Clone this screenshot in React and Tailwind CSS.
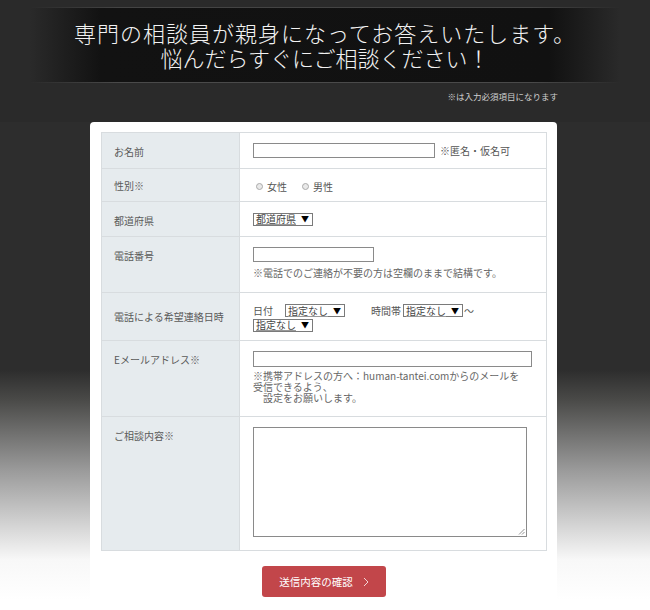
import React from "react";

const font = { fontFamily: '"Noto Sans CJK JP", "Noto Sans", sans-serif' };

function FakeSelect({ label, className = "" }) {
  return (
    <span
      className={`inline-flex h-[13px] items-center border border-[#7a7a7a] bg-white pl-[2px] pr-[3px] text-[10px] leading-none text-[#444] ${className}`}
    >
      <span className="underline decoration-[#999]">{label}</span>
      <span className="ml-[5px] text-[8px] text-black">▼</span>
    </span>
  );
}

function Radio({ label }) {
  return (
    <span className="inline-flex items-center gap-[4px]">
      <span className="inline-block h-[7px] w-[7px] rounded-full border border-[#aaa] bg-[#e9e9e9]" />
      <span>{label}</span>
    </span>
  );
}

function Row({ label, labelClass = "pt-[11px]", children, className = "" }) {
  return (
    <div className={`flex border-t border-[#d8dcdf] ${className}`}>
      <div
        className={`w-[138px] shrink-0 border-r border-[#d8dcdf] bg-[#e6ebee] pl-[12px] text-[10px] text-[#5a5a5a] ${labelClass}`}
      >
        {label}
      </div>
      <div className="flex-1 pl-[13px] text-[10px] text-[#555]">{children}</div>
    </div>
  );
}

export default function App() {
  return (
    <div
      className="h-[610px] w-[650px] overflow-hidden bg-[linear-gradient(to_bottom,#2d2d2d_0px,#2d2d2d_370px,#4a4a48_400px,#9a9a9a_470px,#f8f8f8_560px,#ffffff_600px)]"
      style={font}
    >
      {/* header */}
      <div className="h-[122px] bg-[#2a2a2a] pt-[7px]">
        <div className="mx-auto w-[590px]">
          <div className="h-px bg-[linear-gradient(to_right,transparent,#444_15%,#444_85%,transparent)]" />
          <div className="flex h-[74px] flex-col items-center justify-center bg-[linear-gradient(to_right,#2a2a2a_0%,#121212_12%,#111111_88%,#2a2a2a_100%)]">
            <p className="text-[22px] font-light leading-[25px] tracking-[1px] text-[#f2f2f2]">
              専門の相談員が親身になってお答えいたします。
            </p>
            <p className="text-[22px] font-light leading-[25px] text-[#f2f2f2]">
              悩んだらすぐにご相談ください！
            </p>
          </div>
          <div className="h-px bg-[linear-gradient(to_right,transparent,#4a4a4a_15%,#4a4a4a_85%,transparent)]" />
        </div>
        <p className="mt-[7px] pr-[92px] text-right text-[8.5px] text-[#cfcfcf]">
          ※は入力必須項目になります
        </p>
      </div>

      {/* form card */}
      <div className="ml-[90px] w-[467px] rounded-t-[4px] bg-white px-[10px] pt-[10px] pl-[11px]">
        <div className="border-b border-l border-r border-[#d8dcdf]">
          <Row label="お名前" className="h-[36px]">
            <div className="flex items-center pt-[10px]">
              <span className="h-[15px] w-[182px] border border-[#8a8a8a] bg-white" />
              <span className="ml-[5px]">※匿名・仮名可</span>
            </div>
          </Row>
          <Row label="性別※" className="h-[33px]" labelClass="pt-[9px]">
            <div className="flex items-center gap-[15px] pt-[10px] pl-[3px]">
              <Radio label="女性" />
              <Radio label="男性" />
            </div>
          </Row>
          <Row label="都道府県" className="h-[35px]">
            <div className="pt-[9px]">
              <FakeSelect label="都道府県" />
            </div>
          </Row>
          <Row label="電話番号" className="h-[56px]">
            <div className="pt-[10px]">
              <span className="block h-[15px] w-[121px] border border-[#8a8a8a] bg-white" />
              <p className="mt-[3px] text-[#666]">
                ※電話でのご連絡が不要の方は空欄のままで結構です。
              </p>
            </div>
          </Row>
          <Row
            label="電話による希望連絡日時"
            className="h-[48px]"
            labelClass="pt-[16px]"
          >
            <div className="pt-[11px] leading-[13px]">
              <div className="flex items-center">
                <span>日付</span>
                <FakeSelect label="指定なし" className="ml-[12px]" />
                <span className="ml-[26px]">時間帯</span>
                <FakeSelect label="指定なし" className="ml-[2px]" />
                <span className="ml-[1px]">～</span>
              </div>
              <div className="mt-[1px]">
                <FakeSelect label="指定なし" />
              </div>
            </div>
          </Row>
          <Row label="Eメールアドレス※" className="h-[76px]">
            <div className="pt-[10px]">
              <span className="block h-[16px] w-[279px] border border-[#8a8a8a] bg-white" />
              <p className="mt-[3px] leading-[11px] text-[#666]">
                ※携帯アドレスの方へ：human-tantei.comからのメールを
                <br />
                受信できるよう、
                <br />
                <span className="pl-[10px]">設定をお願いします。</span>
              </p>
            </div>
          </Row>
          <Row label="ご相談内容※" className="h-[134px]">
            <div className="pt-[10px]">
              <div className="relative h-[110px] w-[274px] border border-[#8a8a8a] bg-white">
                <svg
                  className="absolute bottom-[1px] right-[1px]"
                  width="7"
                  height="7"
                  viewBox="0 0 7 7"
                >
                  <path d="M6.5 1 L1 6.5 M6.5 4 L4 6.5" stroke="#777" strokeWidth="0.8" />
                </svg>
              </div>
            </div>
          </Row>
        </div>

        <div className="flex justify-center pt-[15px] pb-[20px]">
          <button className="flex h-[31px] w-[124px] items-center justify-center rounded-[3px] bg-[#c2464a] text-[10.5px] text-white">
            <span>送信内容の確認</span>
            <svg className="ml-[10px]" width="6" height="10" viewBox="0 0 6 10">
              <path d="M1 1 L5 5 L1 9" fill="none" stroke="#f3d6d6" strokeWidth="1" />
            </svg>
          </button>
        </div>
      </div>
    </div>
  );
}
